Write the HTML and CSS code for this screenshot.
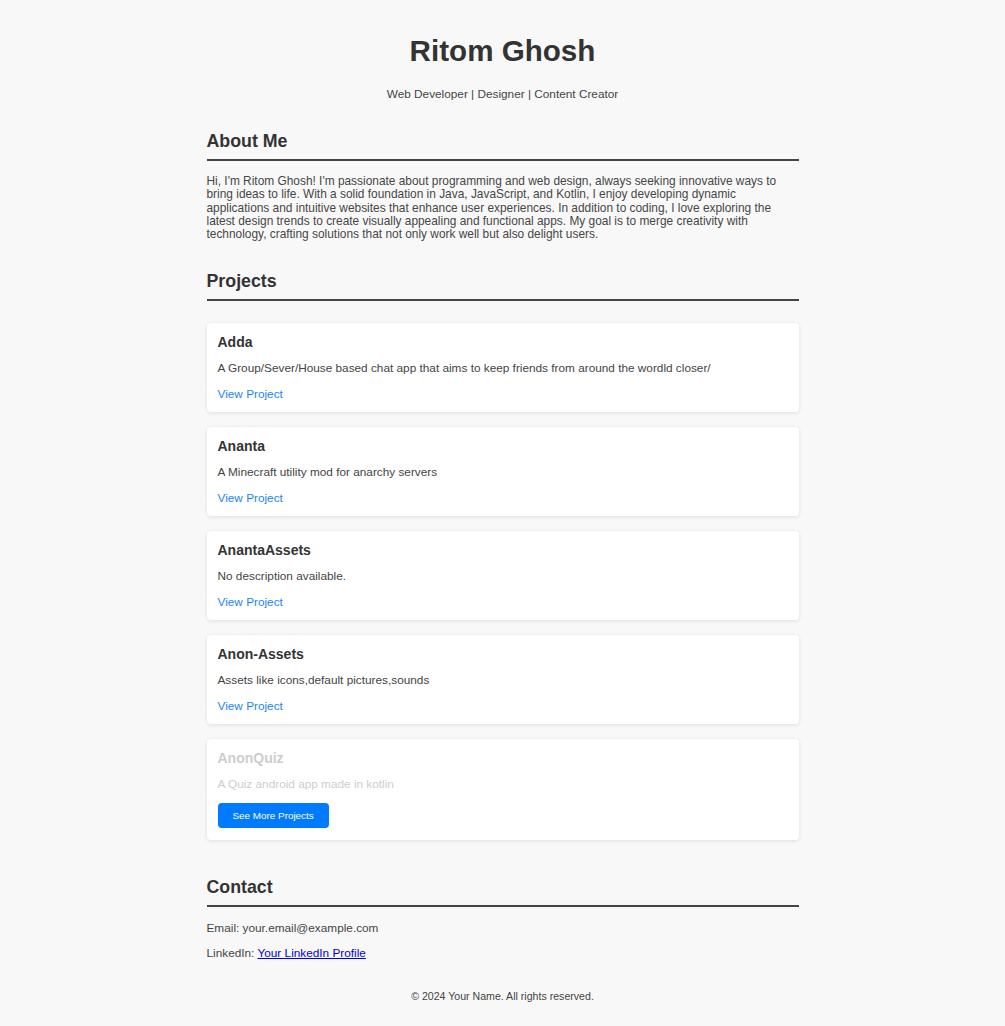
FILE: index.html
```html
<!DOCTYPE html>
<html lang="en">
<head>
<meta charset="utf-8">
<title>Ritom Ghosh</title>
<link rel="stylesheet" href="styles.css">
</head>
<body>
<header class="header">
  <h1 class="name">Ritom Ghosh</h1>
  <p class="tagline">Web Developer | Designer | Content Creator</p>
</header>
<main class="container">
  <section class="section">
    <h2 class="section-title">About Me</h2>
    <p class="about">Hi, I'm Ritom Ghosh! I'm passionate about programming and web design, always seeking innovative ways to bring ideas to life. With a solid foundation in Java, JavaScript, and Kotlin, I enjoy developing dynamic applications and intuitive websites that enhance user experiences. In addition to coding, I love exploring the latest design trends to create visually appealing and functional apps. My goal is to merge creativity with technology, crafting solutions that not only work well but also delight users.</p>
  </section>
  <section class="section projects">
    <h2 class="section-title">Projects</h2>
    <div class="project-list">
      <div class="card">
        <h3 class="card-title">Adda</h3>
        <p class="card-desc">A Group/Sever/House based chat app that aims to keep friends from around the wordld closer/</p>
        <a class="card-link" href="#">View Project</a>
      </div>
      <div class="card">
        <h3 class="card-title">Ananta</h3>
        <p class="card-desc">A Minecraft utility mod for anarchy servers</p>
        <a class="card-link" href="#">View Project</a>
      </div>
      <div class="card">
        <h3 class="card-title">AnantaAssets</h3>
        <p class="card-desc">No description available.</p>
        <a class="card-link" href="#">View Project</a>
      </div>
      <div class="card">
        <h3 class="card-title">Anon-Assets</h3>
        <p class="card-desc">Assets like icons,default pictures,sounds</p>
        <a class="card-link" href="#">View Project</a>
      </div>
      <div class="card card-faded">
        <h3 class="card-title">AnonQuiz</h3>
        <p class="card-desc">A Quiz android app made in kotlin</p>
        <button class="more-btn">See More Projects</button>
      </div>
    </div>
  </section>
  <section class="section contact">
    <h2 class="section-title">Contact</h2>
    <p class="contact-line">Email: your.email@example.com</p>
    <p class="contact-line">LinkedIn: <a class="contact-link" href="#">Your LinkedIn Profile</a></p>
  </section>
</main>
<footer class="footer">
  <p class="footer-text">© 2024 Your Name. All rights reserved.</p>
</footer>
</body>
</html>
```

FILE: styles.css
```css
html, body {
  margin: 0;
  padding: 0;
}
body {
  background: #f8f8f8;
  color: #333;
  font-family: "Liberation Sans", Arial, sans-serif;
  font-size: 11.8px;
  line-height: 1.13;
}
.header {
  text-align: center;
  padding-top: 34px;
}
.name {
  margin: 0;
  font-size: 29.6px;
  line-height: 34px;
  font-weight: bold;
  color: #333;
}
.tagline {
  margin: 19px 0 0;
  line-height: 14px;
  color: #444;
}
.container {
  width: 592px;
  margin: 0 auto;
}
.section {
  margin-top: 30px;
}
.section-title {
  margin: 0;
  font-size: 17.8px;
  line-height: 20px;
  font-weight: bold;
  padding-bottom: 8px;
  border-bottom: 2px solid #444;
  color: #333;
}
.about {
  margin: 14px 0 0;
  font-size: 11.9px;
  line-height: 13.25px;
  color: #464646;
}
.project-list {
  margin-top: 22px;
  display: flex;
  flex-direction: column;
  gap: 15px;
}
.card {
  background: #fff;
  border-radius: 4px;
  box-shadow: 0 1px 4px rgba(0, 0, 0, 0.1);
  padding: 11px;
}
.card-title {
  margin: 0;
  font-size: 14px;
  line-height: 16px;
  font-weight: bold;
  color: #333;
}
.card-desc {
  margin: 11px 0 0;
  line-height: 14px;
  color: #444;
}
.card-link {
  display: block;
  margin-top: 12px;
  line-height: 14px;
  color: #1a84ff;
  text-decoration: none;
}
.card-faded .card-title,
.card-faded .card-desc {
  color: #cdcdcd;
}
.card-faded {
  padding-bottom: 12px;
}
.more-btn {
  display: block;
  margin-top: 12px;
  height: 25px;
  padding: 0 15px;
  border: none;
  border-radius: 3.7px;
  background: #007bff;
  color: #fff;
  font-family: "Liberation Sans", Arial, sans-serif;
  font-size: 9.9px;
}
.contact {
  margin-top: 37px;
}
.contact-line {
  margin: 14px 0 0;
  line-height: 14px;
  color: #444;
}
.contact-line + .contact-line {
  margin-top: 11px;
}
.contact-link {
  color: #0000ee;
}
.footer {
  text-align: center;
  padding: 29px 0 20px;
}
.footer-text {
  margin: 0;
  font-size: 10.6px;
  line-height: 14px;
  color: #444;
}
```
